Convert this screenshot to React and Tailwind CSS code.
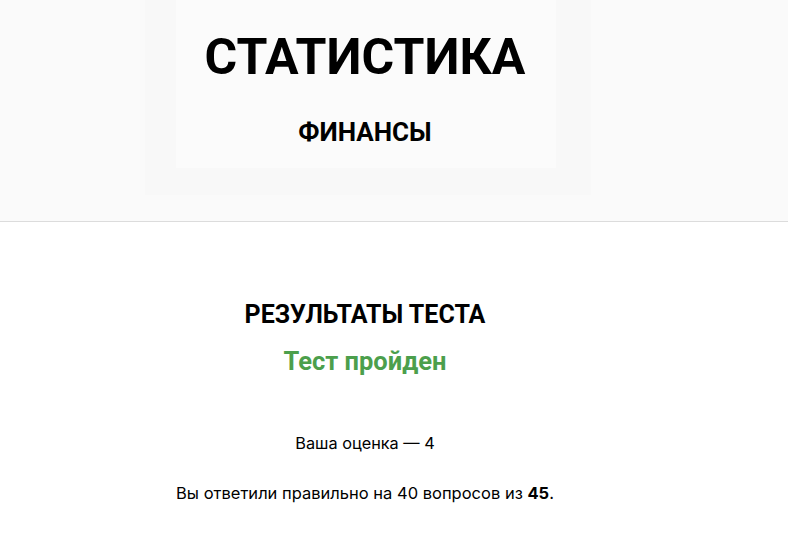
import React from 'react';

const heading = { fontFamily: 'Roboto, "Liberation Sans", sans-serif' };
const body = { fontFamily: 'Inter, "Noto Sans", sans-serif' };

const App = () => {
    return (
        <div className="min-h-screen bg-white text-black">
            {/* Header with a faint framed backdrop */}
            <header className="relative h-[222px] bg-[#fafafa] border-b border-[#dcdcdc] overflow-hidden">
                <div className="absolute left-[145px] top-0 w-[446px] h-[195px] bg-[#f8f8f8]"></div>
                <div className="absolute left-[176px] top-0 w-[380px] h-[168px] bg-[#fbfbfb]"></div>
                <div className="relative w-[730px] flex flex-col items-center pt-[27px]" style={heading}>
                    <h1 className="text-[50px] leading-[60px] font-bold">СТАТИСТИКА</h1>
                    <h2 className="mt-[30px] text-[26px] leading-[30px] font-bold">ФИНАНСЫ</h2>
                </div>
            </header>

            {/* Test result */}
            <main className="w-[730px] flex flex-col items-center pt-[79px]">
                <h3 className="text-[25px] leading-[28px] font-bold" style={heading}>РЕЗУЛЬТАТЫ ТЕСТА</h3>
                <p className="mt-[18px] text-[25.5px] leading-[28px] font-bold text-[#4c9f4c]" style={heading}>Тест пройден</p>
                <p className="mt-[56px] text-[16.3px] leading-[24px]" style={body}>Ваша оценка — 4</p>
                <p className="mt-[26px] text-[16.5px] leading-[24px]" style={body}>
                    Вы ответили правильно на 40 вопросов из <b className="font-bold">45</b>.
                </p>
            </main>
        </div>
    );
};

export default App;
